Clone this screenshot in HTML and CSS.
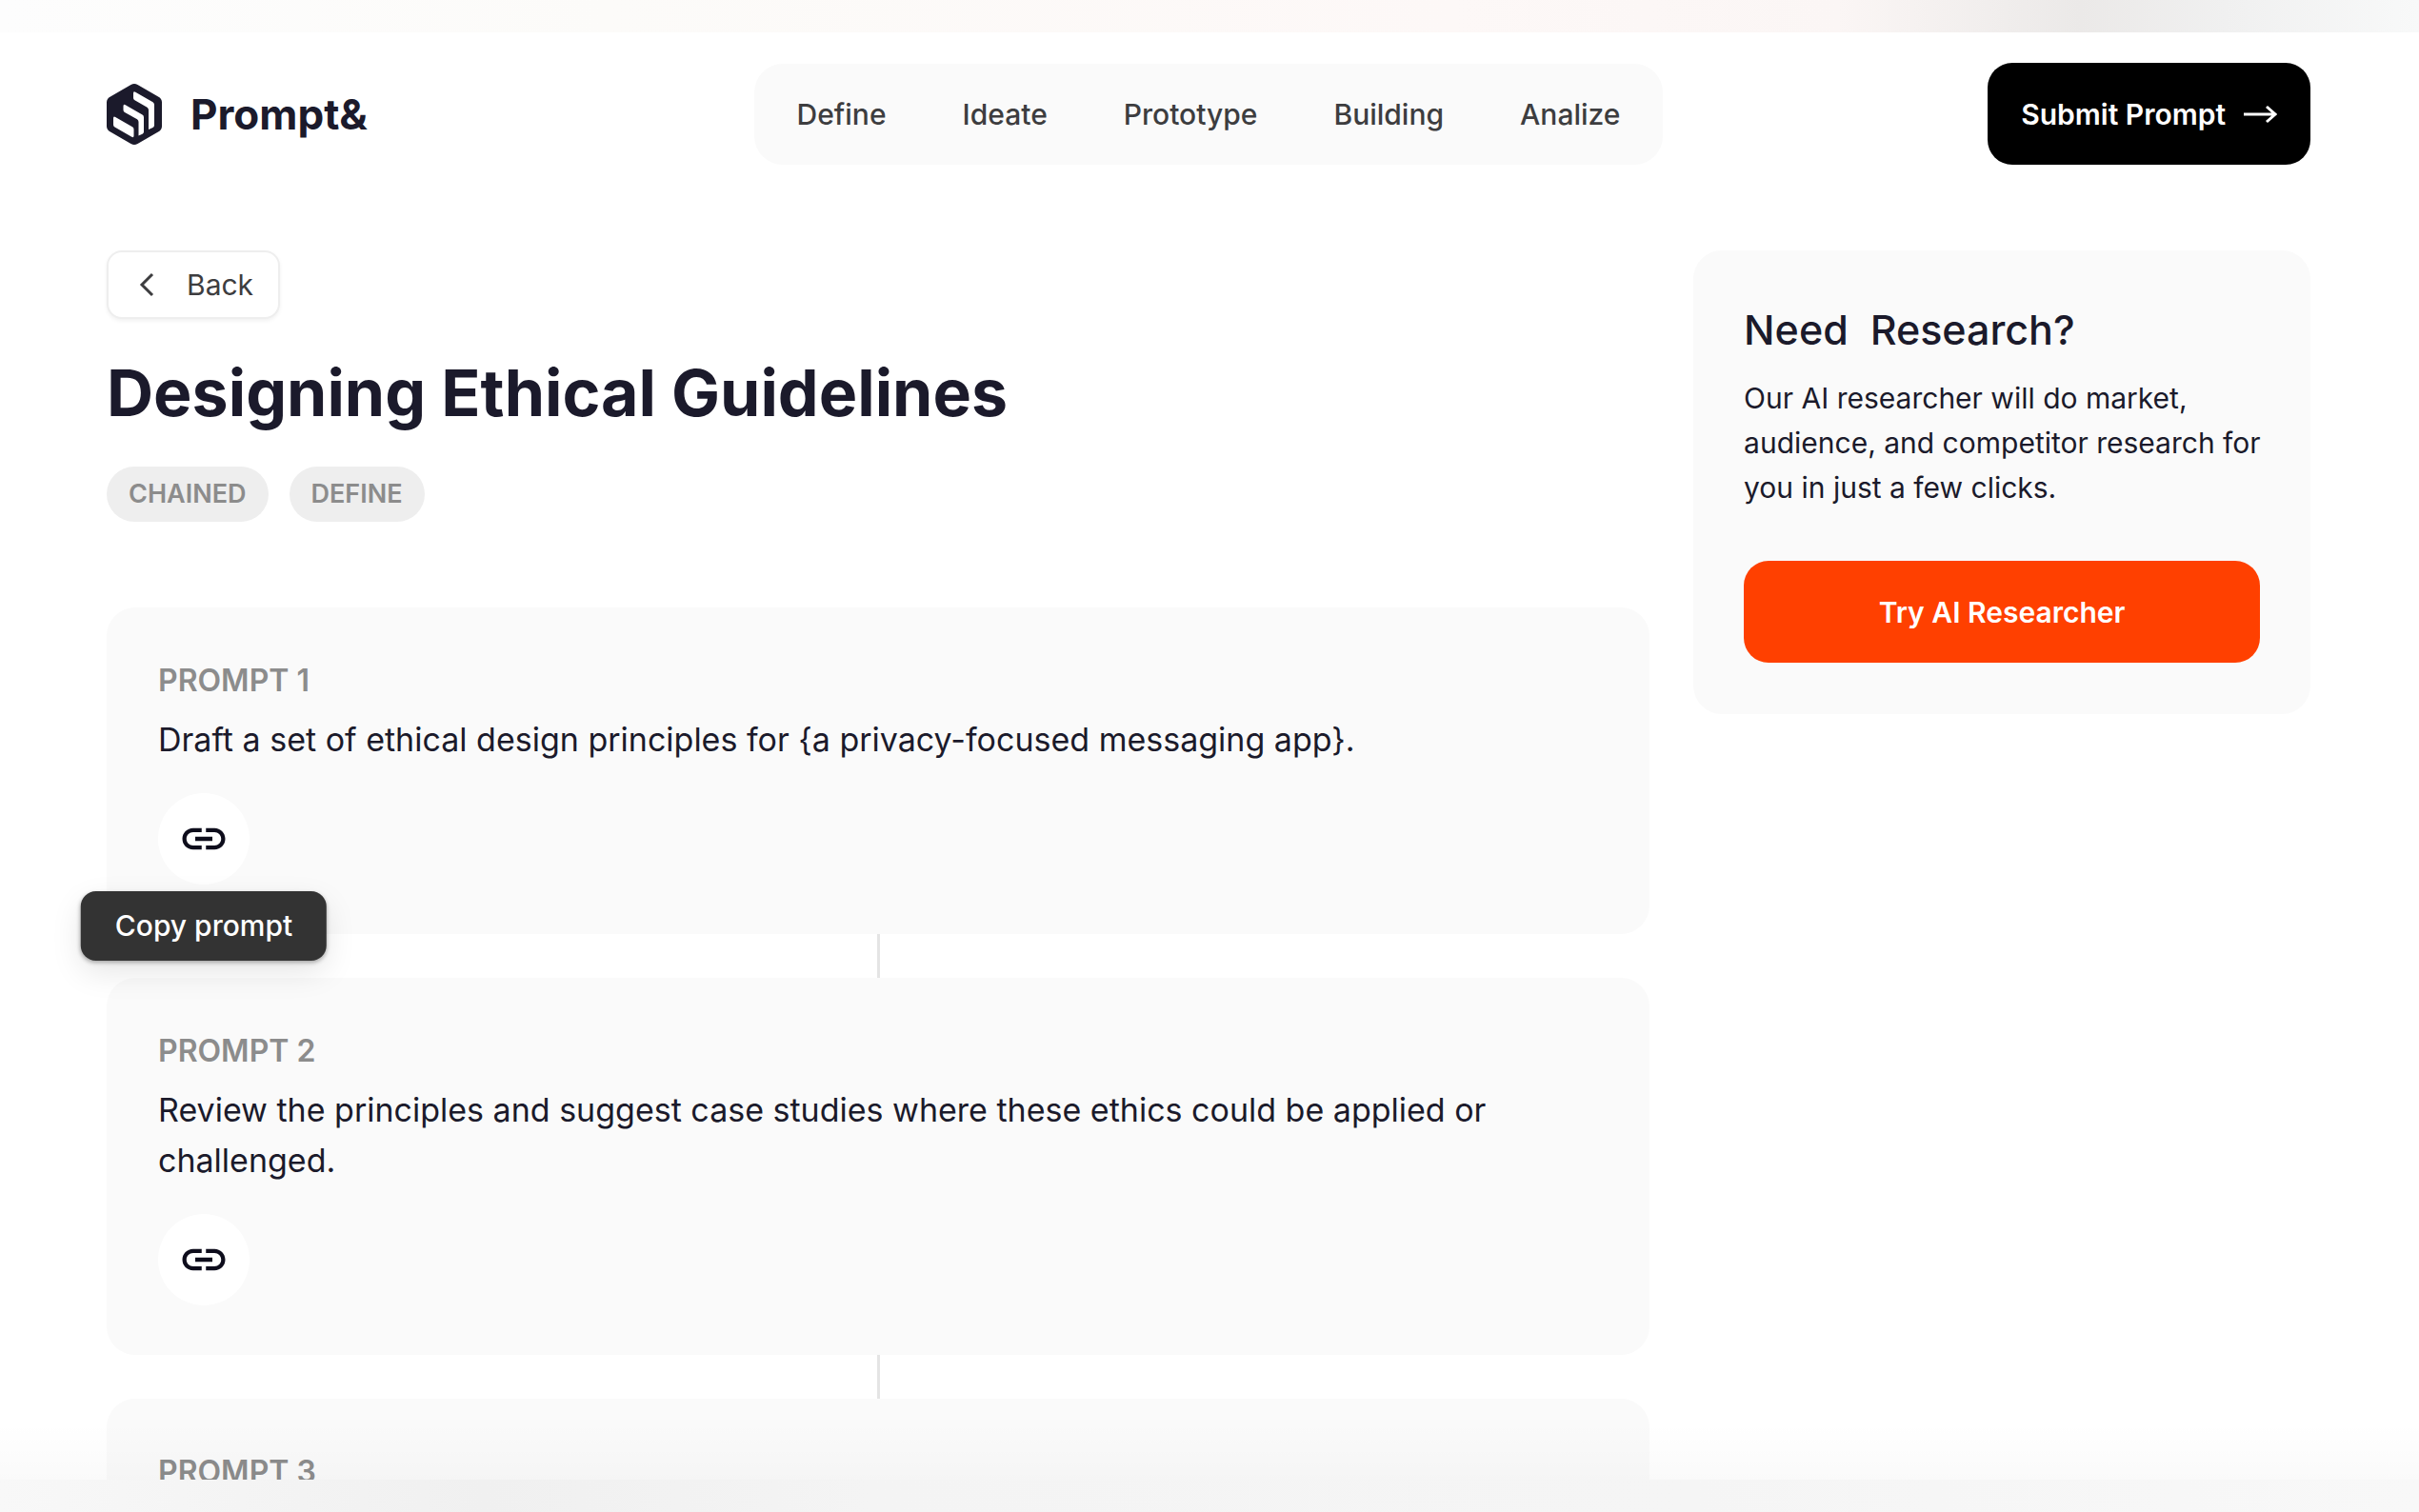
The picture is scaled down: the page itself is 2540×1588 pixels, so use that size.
FILE: index.html
```
<!DOCTYPE html>
<html lang="en">

<head>
    <meta charset="UTF-8">
    <meta name="viewport" content="width=device-width, initial-scale=1.0">
    <title>Designing Ethical Guidelines - Prompt&amp;</title>
    <link rel="stylesheet" href="styles.css">
</head>

<body>
    <div class="band band-top"></div>

    <div class="page">
        <header class="header">
            <a href="#" class="logo">
                <svg class="logo-mark" viewBox="0 0 58 64" aria-hidden="true">
                    <path fill="#1b1a2b" d="M25.500 1Q29 -1 32.500 1L54.500 13.700Q58 15.700 58 19.500V44.500Q58 48.300 54.500 50.300L32.500 63Q29 65 25.500 63L3.500 50.300Q0 48.300 0 44.500V19.500Q0 15.700 3.500 13.700Z"/>
                    <path fill="#fff" d="M28 10Q28 7.500 30.200 8.800L48.500 19.300Q50 20.200 50 22V43.500Q50 45.200 48.500 46L44 48V27.500Q44 25.700 42.500 24.800L29.500 17.300Q28 16.400 28 15Z"/>
                    <path fill="#fff" d="M17.500 23.500Q17.500 21 19.700 22.300L37.500 32.500Q39 33.400 39 35.200V50.500Q39 52 37.500 52.800L33.500 54.500V40Q33.500 38.200 32 37.300L19 30Q17.500 29.100 17.500 27.500Z"/>
                    <path fill="#fff" d="M7 36.200Q7 33.700 9.200 35L27 45.200Q28.500 46.100 28.500 47.800V54.500Q28.500 57 26.300 55.700L8.500 45.500Q7 44.600 7 43Z"/>
                </svg>
                <span>Prompt&amp;</span>
            </a>
            <nav class="nav">
                <a href="#">Define</a>
                <a href="#">Ideate</a>
                <a href="#">Prototype</a>
                <a href="#">Building</a>
                <a href="#">Analize</a>
            </nav>
            <button type="button" class="btn btn-dark">
                Submit Prompt
                <svg class="arrow" viewBox="0 0 36 20" aria-hidden="true"><path d="M1 10H34M25 2L34 10L25 18"/></svg>
            </button>
        </header>

        <div class="row">
            <main class="content">
                <button type="button" class="back">
                    <svg class="chevron" viewBox="0 0 16 26" aria-hidden="true"><path d="M14 2L3 13L14 24"/></svg>
                    Back
                </button>
                <h1>Designing Ethical Guidelines</h1>
                <div class="tags">
                    <span class="tag">CHAINED</span>
                    <span class="tag">DEFINE</span>
                </div>

                <div class="prompts">
                    <section class="card prompt">
                        <h2>PROMPT 1</h2>
                        <p>Draft a set of ethical design principles for {a privacy-focused messaging app}.</p>
                        <div class="copy-wrap">
                            <button type="button" class="copy" aria-label="Copy prompt 1">
                                <svg viewBox="0 0 24 24" aria-hidden="true"><path d="M3.900 12c0-1.710 1.390-3.100 3.100-3.100h4V7H7c-2.760 0-5 2.240-5 5s2.240 5 5 5h4v-1.900H7c-1.710 0-3.100-1.390-3.100-3.100zM8 13h8v-2H8v2zm9-6h-4v1.900h4c1.710 0 3.100 1.390 3.100 3.100s-1.390 3.100-3.100 3.100h-4V17h4c2.760 0 5-2.240 5-5s-2.240-5-5-5z"/></svg>
                            </button>
                            <span class="tooltip" role="tooltip">Copy prompt</span>
                        </div>
                    </section>
                    <div class="connector"></div>
                    <section class="card prompt">
                        <h2>PROMPT 2</h2>
                        <p>Review the principles and suggest case studies where these ethics could be applied or challenged.</p>
                        <div class="copy-wrap">
                            <button type="button" class="copy" aria-label="Copy prompt 2">
                                <svg viewBox="0 0 24 24" aria-hidden="true"><path d="M3.900 12c0-1.710 1.390-3.100 3.100-3.100h4V7H7c-2.760 0-5 2.240-5 5s2.240 5 5 5h4v-1.900H7c-1.710 0-3.100-1.390-3.100-3.100zM8 13h8v-2H8v2zm9-6h-4v1.900h4c1.710 0 3.100 1.390 3.100 3.100s-1.390 3.100-3.100 3.100h-4V17h4c2.760 0 5-2.240 5-5s-2.240-5-5-5z"/></svg>
                            </button>
                        </div>
                    </section>
                    <div class="connector"></div>
                    <section class="card prompt">
                        <h2>PROMPT 3</h2>
                    </section>
                </div>
            </main>

            <aside class="card research">
                <h2>Need&nbsp; Research?</h2>
                <p>Our AI researcher will do market, audience, and competitor research for you in just a few clicks.</p>
                <button type="button" class="btn btn-accent">Try AI Researcher</button>
            </aside>
        </div>
    </div>

    <div class="band band-bottom"></div>
</body>

</html>
```
FILE: styles.css
```
:root {
    --ink: #1b1a2b;
    --text: #3d3d3f;
    --muted: #8c8c8c;
    --card: #fafafa;
    --accent: #ff4000;
}

* {
    box-sizing: border-box;
    margin: 0;
    padding: 0;
}

body {
    font-family: Inter, "Liberation Sans", sans-serif;
    font-size: 30px;
    background-color: #fff;
    color: var(--ink);
    height: 100vh;
    display: flex;
    flex-direction: column;
    overflow: hidden;
}

a {
    color: inherit;
    text-decoration: none;
}

button {
    font: inherit;
    border: none;
    cursor: pointer;
}

.band {
    flex: none;
    height: 34px;
}

.band-top {
    background: linear-gradient(90deg, #fdfdfd, #fcfbf9 25%, #fdf8f7 60%, #fbf6f5 76%, #ebe9e8 86%, #f0f0f0 92%, #f8f9f9);
}

.band-bottom {
    background: linear-gradient(90deg, #f8f8f8, #f0f0f0 20%, #f4f4f4 36%, #f5f5f5 70%, #f8f8f8);
}

.page {
    flex: 1;
    min-height: 0;
    overflow: hidden;
    padding: 32px 114px 0 112px;
    position: relative;
}

/* soft fade over the cut-off content */
.page::after {
    content: "";
    position: absolute;
    left: 0;
    right: 0;
    bottom: 0;
    height: 60px;
    background: linear-gradient(rgba(0, 0, 0, 0), rgba(0, 0, 0, 0.02));
}

.header {
    display: grid;
    grid-template-columns: 1fr auto 1fr;
    align-items: center;
    margin-bottom: 90px;
}

.logo {
    display: flex;
    align-items: center;
    gap: 30px;
    font-size: 44px;
    line-height: 64px;
    font-weight: 700;
}

.logo-mark {
    width: 58px;
    height: 64px;
    overflow: visible;
}

.nav {
    display: flex;
    gap: 80px;
    padding: 32px 45px;
    line-height: 42px;
    border-radius: 30px;
    background-color: var(--card);
    color: var(--text);
    font-weight: 500;
}

.btn {
    display: flex;
    align-items: center;
    justify-content: center;
    gap: 18px;
    height: 107px;
    padding: 0 35px;
    border-radius: 26px;
    color: #fff;
    font-weight: 600;
}

.btn-dark {
    justify-self: end;
    background-color: #000;
}

.btn-accent {
    width: 100%;
    background-color: var(--accent);
}

.arrow {
    width: 36px;
    height: 20px;
    fill: none;
    stroke: currentColor;
    stroke-width: 3;
}

.row {
    display: flex;
    align-items: flex-start;
    gap: 46px;
}

.content {
    flex: 1;
    min-width: 0;
}

.back {
    display: flex;
    align-items: center;
    gap: 34px;
    height: 72px;
    padding: 0 26px 0 32px;
    border: 2px solid #eee;
    border-radius: 16px;
    background-color: #fff;
    color: var(--text);
    box-shadow: 0 2px 4px rgba(0, 0, 0, 0.06);
}

.chevron {
    width: 16px;
    height: 26px;
    fill: none;
    stroke: currentColor;
    stroke-width: 3;
}

h1 {
    margin-top: 34px;
    font-size: 68px;
    line-height: 86px;
    font-weight: 700;
}

.tags {
    display: flex;
    gap: 22px;
    margin-top: 35px;
}

.tag {
    padding: 0 23px;
    border-radius: 30px;
    background-color: #eee;
    color: var(--muted);
    font-size: 27px;
    line-height: 58px;
    font-weight: 600;
}

.card {
    padding: 54px 53px;
    border-radius: 30px;
    background-color: var(--card);
}

.prompts {
    margin-top: 90px;
}

.prompt {
    padding: 56px 54px 52px;
}

.prompt h2 {
    color: var(--muted);
    font-size: 32px;
    line-height: 42px;
    font-weight: 600;
}

.prompt p {
    margin-top: 14px;
    font-size: 34px;
    line-height: 53px;
}

.copy-wrap {
    position: relative;
    width: 96px;
    margin-top: 30px;
}

.copy {
    display: flex;
    align-items: center;
    justify-content: center;
    width: 96px;
    height: 96px;
    border-radius: 50%;
    background-color: #fff;
}

.copy svg {
    width: 54px;
    height: 54px;
    fill: #0e0d1c;
}

.tooltip {
    position: absolute;
    top: 103px;
    left: 50%;
    transform: translateX(-50%);
    padding: 0 36px;
    border-radius: 16px;
    background-color: #333;
    color: #fff;
    line-height: 73px;
    font-weight: 500;
    white-space: nowrap;
    box-shadow: 0 12px 32px rgba(0, 0, 0, 0.1), 0 2px 4px rgba(0, 0, 0, 0.3);
}

.connector {
    width: 3px;
    height: 46px;
    margin: 0 auto;
    background-color: #e4e4e4;
}

.research {
    width: 28%;
}

.research h2 {
    font-size: 43px;
    line-height: 58px;
    font-weight: 500;
}

.research p {
    margin: 20px -10px 53px 0;
    line-height: 47px;
}
```
